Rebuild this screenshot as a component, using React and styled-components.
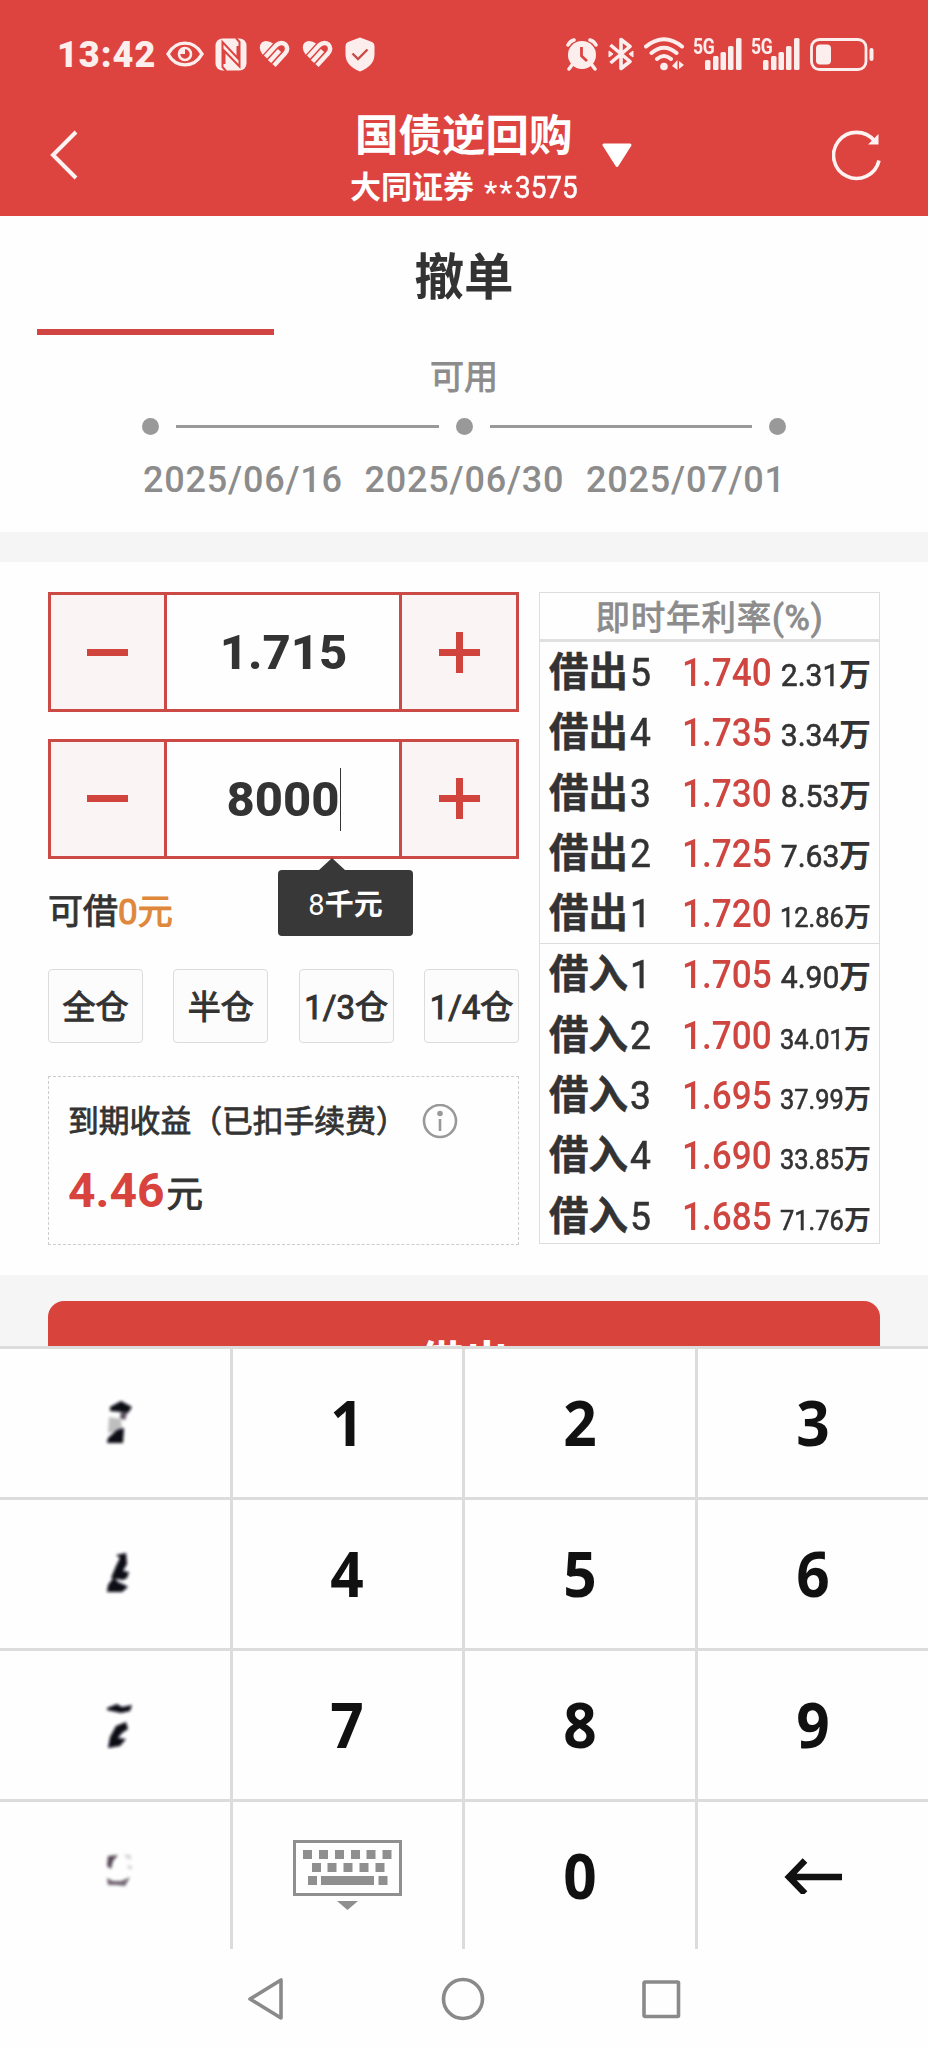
import React, { useState } from "react";
import styled, { createGlobalStyle } from "styled-components";

const asks = [
  { label: "借出", level: 5, rate: "1.740", volume: "2.31" },
  { label: "借出", level: 4, rate: "1.735", volume: "3.34" },
  { label: "借出", level: 3, rate: "1.730", volume: "8.53" },
  { label: "借出", level: 2, rate: "1.725", volume: "7.63" },
  { label: "借出", level: 1, rate: "1.720", volume: "12.86" },
];

const bids = [
  { label: "借入", level: 1, rate: "1.705", volume: "4.90" },
  { label: "借入", level: 2, rate: "1.700", volume: "34.01" },
  { label: "借入", level: 3, rate: "1.695", volume: "37.99" },
  { label: "借入", level: 4, rate: "1.690", volume: "33.85" },
  { label: "借入", level: 5, rate: "1.685", volume: "71.76" },
];

const dates = ["2025/06/16", "2025/06/30", "2025/07/01"];
const positions = ["全仓", "半仓", "1/3仓", "1/4仓"];

const HeartIcon = () => (
  <svg width="31" height="28" viewBox="0 0 31 28" fill="none" stroke="#fdeeee" strokeWidth="4.4">
    <path d="M3.800 14.700C-1 9 0 1.500 7 1Q11 1 14 3.500Z" fill="#fdeeee" stroke="none" />
    <path d="M6.500 17L17 5.500Q22 1 26.500 4.500Q30 9 26 13.500L15 25.500" />
    <path d="M10.500 21.500L20.500 10.500" />
  </svg>
);

const SignalIcon = () => (
  <Signal>
    <span>5G</span>
    <svg width="48" height="34" viewBox="0 0 48 34" fill="#fdeeee">
      <rect x="11" y="23" width="5.5" height="10" rx="1.5" />
      <rect x="19" y="19" width="5.5" height="14" rx="1.5" />
      <rect x="26.500" y="15" width="5.500" height="18" rx="1.5" />
      <rect x="34" y="9" width="5.500" height="24" rx="1.5" />
      <rect x="42" y="1" width="5.500" height="32" rx="1.5" />
    </svg>
  </Signal>
);

const StatusIcons = () => (
  <StatusBar>
    <Clock>13:42</Clock>
    <LeftIcons>
      <svg width="38" height="26" viewBox="0 0 38 26" fill="none" stroke="#fdeeee">
        <path d="M2 13C10 -1.500 28 -1.500 36 13C28 27.500 10 27.500 2 13Z" strokeWidth="3.400" />
        <circle cx="19" cy="13" r="6" strokeWidth="2.6" />
        <path d="M19 13V7.500A5.500 5.500 0 0 0 13.500 13Z" fill="#fdeeee" stroke="none" />
      </svg>
      <svg width="32" height="33" viewBox="0 0 32 33">
        <rect x="0.500" y="0.500" width="31" height="32" rx="7" fill="#fdeeee" />
        <path
          d="M11 33L7.500 29V4L22.500 20V8M9.500 26V13L24.500 28.500V4L21 0"
          stroke="#dd4440"
          strokeWidth="2"
          fill="none"
        />
      </svg>
      <HeartIcon />
      <HeartIcon />
      <svg width="30" height="35" viewBox="0 0 30 35">
        <path d="M15 0.500L27 5Q29.500 6 29.500 9V17Q29.500 29 15 34.500Q0.500 29 0.500 17V9Q0.500 6 3 5Z" fill="#fdeeee" />
        <path d="M7.500 16.500L13 22L22.500 12.500" stroke="#c94b47" strokeWidth="2.4" fill="none" />
      </svg>
    </LeftIcons>
    <RightIcons>
      <svg width="32" height="33" viewBox="0 0 32 33">
        <g stroke="#fdeeee" strokeWidth="3.500" strokeLinecap="round" fill="none">
          <path d="M2 7Q4 3 8 2M24 2Q28 3 30 7M6 27L3 31M26 27L29 31" />
        </g>
        <circle cx="16" cy="17" r="14" fill="#fdeeee" />
        <path d="M15.500 9V18L21 23" stroke="#dd4440" strokeWidth="2.800" fill="none" />
      </svg>
      <svg width="26" height="34" viewBox="0 0 26 34" fill="none" stroke="#fdeeee" strokeWidth="3.600">
        <path d="M2.500 8L22 24.500L13 31.500V2.500L22 9.500L2.500 26" strokeLinejoin="round" />
        <path d="M1 14L5 17L1 20ZM25 14L21 17L25 20Z" fill="#fdeeee" strokeWidth="1" />
      </svg>
      <svg width="41" height="34" viewBox="0 0 41 34" fill="none" stroke="#fdeeee" strokeWidth="4" strokeLinecap="round">
        <path d="M2 9.500Q20 -5 38 9.500M7.500 16Q20 5.500 32.500 16M13 22Q20 16 27 22" />
        <circle cx="20" cy="29.500" r="3.800" fill="#fdeeee" stroke="none" />
        <path d="M28 29L33.500 23V33Z M35 24L40 28L35 32Z" fill="#fdeeee" stroke="none" />
      </svg>
      <SignalIcon />
      <SignalIcon />
      <svg width="64" height="33" viewBox="0 0 64 33">
        <rect x="1.500" y="1.500" width="54.500" height="30" rx="8" fill="none" stroke="#fdeeee" strokeWidth="2.800" />
        <rect x="6" y="6.500" width="15" height="20" rx="4" fill="#fdeeee" />
        <rect x="59.500" y="10" width="4" height="13" rx="2" fill="#fdeeee" />
      </svg>
    </RightIcons>
  </StatusBar>
);

const KeyboardIcon = () => (
  <svg width="110" height="70" viewBox="0 0 110 70" fill="#8f8f8f">
    <rect x="1.500" y="1.500" width="106" height="53" fill="none" stroke="#8f8f8f" strokeWidth="3" />
    {[10, 26, 42, 58, 73.500, 89.500].map((x) => (
      <rect key={x} x={x} y="10" width="9" height="9" />
    ))}
    {[19, 34.500, 50.500, 66.500, 82.500].map((x) => (
      <rect key={x} x={x} y="23" width="9" height="9" />
    ))}
    <rect x="15" y="36" width="9" height="9" />
    <rect x="28" y="36" width="53" height="9" />
    <rect x="85.500" y="36" width="9" height="9" />
    <path d="M44 61H65L54.500 70Z" />
  </svg>
);

const marks = [
  <>
    <path d="M4 8L15 2L26 8L22 14L16 13L4 12Z" />
    <path d="M15 13L21 14L19 21L14 19Z" opacity="0.7" />
    <path d="M3 18L15 20L16 30L9 33L2 34Z" opacity="0.25" />
    <path d="M11 31L18 29L17 44L1 44L2 39Z" />
  </>,
  <>
    <path d="M10 5L20 3L21 14L17 21L23 22L21 28L17 30L5 28L10 16L14 8Z" />
    <path d="M8 27L12 32L19 35L22 37L16 42H1L2 35Z" />
  </>,
  <>
    <path d="M1 7L11 3L16 6L26 4L24 10L15 12L1 9Z" />
    <path d="M10 25L20 21L22 28L16 32L12 37L20 38L14 45L2 47L4 36Z" />
  </>,
  <>
    <path d="M2 4L12 3L7 9L5 17L1 14Z" opacity="0.7" />
    <path d="M1 26L7 29L15 29L20 27L24 25L19 34L10 33L2 33Z" opacity="0.6" />
    <path d="M18 2L25 3V8L20 6ZM22 13L26 14V18L21 16Z" opacity="0.15" />
  </>,
];

const Smudge = ({ index }) => (
  <svg width="30" height="50" viewBox="-2 -1 30 50" fill="#0b0814">
    <filter id={`soft${index}`} x="-30%" y="-30%" width="160%" height="160%">
      <feGaussianBlur stdDeviation="1.8" />
    </filter>
    <g filter={`url(#soft${index})`}>{marks[index]}</g>
  </svg>
);

const Stepper = ({ children }) => (
  <StepperBox>
    <StepButton>
      <svg width="41" height="41" fill="#d1443e">
        <rect y="17" width="41" height="7" />
      </svg>
    </StepButton>
    <StepValue>{children}</StepValue>
    <StepButton>
      <svg width="41" height="41" fill="#d1443e">
        <rect y="17" width="41" height="7" />
        <rect x="17" width="7" height="41" />
      </svg>
    </StepButton>
  </StepperBox>
);

const Quotes = ({ rows }) => (
  <QuoteGroup>
    {rows.map((row) => (
      <QuoteRow key={row.label + row.level}>
        <Level>
          <b>{row.label}</b>
          <span>{row.level}</span>
        </Level>
        <Rate>{row.rate}</Rate>
        <Volume $small={row.volume.length > 4}>
          <span>{row.volume}</span>
          <b>万</b>
        </Volume>
      </QuoteRow>
    ))}
  </QuoteGroup>
);

const App = () => {
  const [amount] = useState("8000");

  return (
    <>
      <GlobalStyle />
      <Phone>
        <Header>
          <StatusIcons />
          <TitleBar>
            <svg width="28" height="50" viewBox="0 0 28 50" fill="none" stroke="#fff2f2" strokeWidth="4">
              <path d="M26 2L3 25L26 48" />
            </svg>
            <Titles>
              <h1>国债逆回购</h1>
              <Account>
                <b>大同证券</b>
                <i>**</i>
                <span>3575</span>
              </Account>
            </Titles>
            <DropArrow width="30" height="25" viewBox="0 0 30 25">
              <path d="M2 2H28L15 22.500Z" fill="#fff" stroke="#fff" strokeWidth="3" strokeLinejoin="round" />
            </DropArrow>
            <svg width="50" height="52" viewBox="0 0 50 52" fill="none" stroke="#fff2f2" strokeWidth="3.600">
              <path d="M47 31.500A23 23 0 1 1 42.500 12" />
              <path d="M46.500 5V15.500H36Z" fill="#fff2f2" stroke="none" />
            </svg>
          </TitleBar>
        </Header>

        <Tab>撤单</Tab>
        <TabLine />
        <Timeline>
          <p>可用</p>
          <Track>
            <Dot />
            <Line />
            <Dot />
            <Line />
            <Dot />
          </Track>
          <Dates>
            {dates.map((date) => (
              <span key={date}>{date}</span>
            ))}
          </Dates>
        </Timeline>
        <Band />

        <Trade>
          <Form>
            <Stepper>1.715</Stepper>
            <Stepper>
              {amount}
              <Caret />
            </Stepper>
            <Available>
              可借<em>0元</em>
              <Tip>
                8<b>千元</b>
              </Tip>
            </Available>
            <Positions>
              {positions.map((name) => (
                <Position key={name}>{name}</Position>
              ))}
            </Positions>
            <Income>
              <IncomeTitle>
                到期收益（已扣手续费）
                <svg width="36" height="36" viewBox="0 0 36 36" fill="none" stroke="#999" strokeWidth="2.600">
                  <circle cx="18" cy="17" r="16" />
                  <circle cx="18" cy="9.500" r="2.800" fill="#999" stroke="none" />
                  <path d="M18 15V27" />
                </svg>
              </IncomeTitle>
              <IncomeValue>
                <b>4.46</b>元
              </IncomeValue>
            </Income>
          </Form>
          <Book>
            <BookTitle>即时年利率(%)</BookTitle>
            <Quotes rows={asks} />
            <Quotes rows={bids} />
          </Book>
        </Trade>

        <SubmitArea>
          <Submit>借出</Submit>
        </SubmitArea>

        <Keypad>
          {[0, 1, 2].map((row) => (
            <React.Fragment key={row}>
              <Key $side>
                <Smudge index={row} />
              </Key>
              {[1, 2, 3].map((n) => (
                <Key key={n}>
                  <Digit>{row * 3 + n}</Digit>
                </Key>
              ))}
            </React.Fragment>
          ))}
          <Key $side>
            <Smudge index={3} />
          </Key>
          <Key>
            <KeyboardIcon />
          </Key>
          <Key>
            <Digit>0</Digit>
          </Key>
          <Key>
            <svg width="58" height="38" viewBox="0 0 58 38" fill="none" stroke="#111" strokeWidth="6.500">
              <path d="M58 21H5M21 4.500L5 21L21 37.500" />
            </svg>
          </Key>
        </Keypad>

        <NavBar>
          <svg width="38" height="44" viewBox="0 0 38 44">
            <path d="M34 3V41L3 22Z" />
          </svg>
          <svg width="44" height="44" viewBox="0 0 44 44">
            <circle cx="22" cy="22" r="19.500" />
          </svg>
          <svg width="40" height="44" viewBox="0 0 40 44">
            <rect x="3" y="5" width="34.500" height="34.500" rx="1" />
          </svg>
        </NavBar>
      </Phone>
    </>
  );
};

const GlobalStyle = createGlobalStyle`
  * {
    box-sizing: border-box;
  }
  body {
    margin: 0;
    background: #fefefe;
    color: #333;
    font-family: Roboto, "Noto Sans CJK SC", sans-serif;
  }
  svg {
    display: block;
    flex: none;
  }
`;

const Phone = styled.div`
  width: 928px;
  height: 2048px;
  overflow: hidden;
  display: flex;
  flex-direction: column;
`;

const Header = styled.header`
  height: 216px;
  flex: none;
  background: #dd4440;
  color: #fff;
`;

const StatusBar = styled.div`
  height: 108px;
  padding: 0 54px 0 57px;
  display: flex;
  align-items: center;
`;

const Clock = styled.span`
  width: 109px;
  padding-top: 1px;
  font-size: 36px;
  font-weight: 900;
  letter-spacing: 1px;
  color: #fdeeee;
`;

const LeftIcons = styled.div`
  display: flex;
  align-items: center;
  gap: 12px;
  svg:nth-child(2) {
    margin-left: -1px;
  }
`;

const RightIcons = styled.div`
  margin-left: auto;
  display: flex;
  align-items: center;
  gap: 9.800px;
`;

const Signal = styled.div`
  position: relative;
  span {
    position: absolute;
    left: -1px;
    top: 0;
    font-size: 22px;
    line-height: 19px;
    font-weight: 700;
    letter-spacing: -0.500px;
    transform: scaleX(0.8);
    transform-origin: left;
    color: #fdeeee;
  }
`;

const TitleBar = styled.div`
  height: 94px;
  padding: 0 46px 0 50px;
  display: flex;
  align-items: center;
`;

const Titles = styled.div`
  width: 232px;
  margin-left: 272px;
  padding-top: 14px;
  h1 {
    margin: 0 0 0 5px;
    font-size: 43.500px;
    line-height: 54px;
    font-weight: 700;
    white-space: nowrap;
  }
`;

const Account = styled.div`
  display: flex;
  align-items: center;
  margin-top: -3px;
  font-size: 31px;
  line-height: 43px;
  i {
    font-style: normal;
    margin: 10px 0 0 10px;
    letter-spacing: 2px;
  }
  span {
    width: 63px;
    transform: scaleX(0.9);
    transform-origin: left;
    -webkit-text-stroke: 0.500px;
  }
`;

const DropArrow = styled.svg`
  margin: 0 auto 0 20px;
`;

const Tab = styled.div`
  height: 113px;
  flex: none;
  font-size: 49.500px;
  line-height: 125px;
  font-weight: 600;
  text-align: center;
`;

const TabLine = styled.div`
  width: 237px;
  height: 6px;
  flex: none;
  margin-left: 36.500px;
  background: #d14542;
`;

const Timeline = styled.div`
  height: 197px;
  flex: none;
  padding-top: 22px;
  color: #8c8c8c;
  p {
    margin: 0;
    font-size: 34px;
    line-height: 40px;
    text-align: center;
    -webkit-text-stroke: 0.900px;
  }
`;

const Track = styled.div`
  margin: 21px 142px 0 142px;
  display: flex;
  align-items: center;
`;

const Dot = styled.i`
  width: 17px;
  height: 17px;
  border-radius: 50%;
  background: #999;
`;

const Line = styled.i`
  flex: 1;
  height: 3px;
  margin: 0 17px;
  background: #999;
`;

const Dates = styled.div`
  margin: 23px 0 0 143px;
  display: flex;
  font-size: 36px;
  line-height: 44px;
  font-weight: 500;
  letter-spacing: 0.800px;
  span {
    width: 221.500px;
  }
`;

const Band = styled.div`
  height: 30px;
  flex: none;
  background: #f5f5f5;
`;

const Trade = styled.div`
  height: 713px;
  flex: none;
  padding: 30px 48px 0;
  display: flex;
  justify-content: space-between;
`;

const Form = styled.div`
  width: 471px;
`;

const StepperBox = styled.div`
  height: 120px;
  margin-bottom: 26.500px;
  display: grid;
  grid-template-columns: 113px 1fr 114px;
  border: 3px solid #cb4a46;
`;

const StepButton = styled.div`
  display: flex;
  align-items: center;
  justify-content: center;
  background: #faf4f4;
`;

const StepValue = styled.div`
  display: flex;
  align-items: center;
  justify-content: center;
  padding: 1px 0 0 1px;
  border: solid #cb4a46;
  border-width: 0 3px;
  font-size: 49px;
  font-weight: 800;
`;

const Caret = styled.i`
  width: 1px;
  height: 63px;
  background: #333;
`;

const Available = styled.div`
  position: relative;
  height: 57px;
  margin-top: 1px;
  font-size: 35px;
  line-height: 56px;
  -webkit-text-stroke: 0.900px;
  em {
    font-style: normal;
    -webkit-text-stroke: 1.100px;
    color: #df883c;
  }
`;

const Tip = styled.div`
  position: absolute;
  left: 230px;
  top: -15px;
  width: 135px;
  height: 66px;
  padding-top: 2px;
  border-radius: 4px;
  background: #383838;
  color: #fff;
  font-size: 29px;
  line-height: 66px;
  text-align: center;
  -webkit-text-stroke: 0;
  &::before {
    content: "";
    position: absolute;
    left: 41px;
    top: -12px;
    border: solid transparent;
    border-width: 0 13px 12px;
    border-bottom-color: #383838;
  }
`;

const Positions = styled.div`
  margin-top: 27px;
  display: flex;
  justify-content: space-between;
`;

const Position = styled.div`
  width: 95px;
  height: 74px;
  padding-top: 2px;
  display: flex;
  justify-content: center;
  border: 1.500px solid #dcdcdc;
  border-radius: 4px;
  background: #fcfcfc;
  font-size: 33px;
  line-height: 72px;
  white-space: nowrap;
  -webkit-text-stroke: 1px;
`;

const Income = styled.div`
  height: 169px;
  margin-top: 33px;
  padding: 25px 0 0 19px;
  border: 1.500px dashed #ccc;
`;

const IncomeTitle = styled.div`
  display: flex;
  align-items: center;
  gap: 15px;
  font-size: 30.800px;
  line-height: 38px;
  padding-top: 1px;
  white-space: nowrap;
  -webkit-text-stroke: 0.800px;
`;

const IncomeValue = styled.div`
  margin-top: 18px;
  font-size: 36.500px;
  line-height: 64px;
  -webkit-text-stroke: 1px;
  b {
    margin-right: 2px;
    font-size: 48px;
    color: #d8433e;
    -webkit-text-stroke: 0;
  }
`;

const Book = styled.div`
  width: 341px;
  height: 652px;
  border: 1.500px solid #ddd;
`;

const BookTitle = styled.div`
  height: 49px;
  border-bottom: 3px solid #e0e0e0;
  font-size: 34.500px;
  line-height: 50px;
  letter-spacing: 0.800px;
  color: #8c8c8c;
  text-align: center;
  -webkit-text-stroke: 0.900px;
`;

const QuoteGroup = styled.div`
  & + & {
    border-top: 1.500px solid #ddd;
  }
`;

const QuoteRow = styled.div`
  height: 60.300px;
  padding: 1px 8px 0 9px;
  display: grid;
  grid-template-columns: 133px 88px 1fr;
  align-items: baseline;
  line-height: 60px;
  white-space: nowrap;
`;

const Level = styled.span`
  font-size: 39.500px;
  b {
    margin-right: 2px;
    -webkit-text-stroke: 0.500px;
  }
  span {
    display: inline-block;
    transform: scaleX(0.94);
    transform-origin: left;
    -webkit-text-stroke: 0.600px;
  }
`;

const Rate = styled.span`
  width: 98px;
  font-size: 39.500px;
  font-weight: 500;
  transform: scaleX(0.89);
  transform-origin: left;
  color: #cf4641;
`;

const Volume = styled.span`
  text-align: right;
  font-size: ${(props) => (props.$small ? "27px" : "32px")};
  span {
    display: inline-block;
    margin-left: -20px;
    transform: scaleX(0.94);
    transform-origin: right;
    -webkit-text-stroke: 0.600px;
  }
`;

const SubmitArea = styled.div`
  height: 71px;
  flex: none;
  padding: 26px 48px 0;
  overflow: hidden;
  background: #f5f5f5;
`;

const Submit = styled.div`
  height: 120px;
  border-radius: 16px;
  background: #d8433c;
  color: #fff;
  font-size: 46px;
  line-height: 124px;
  font-weight: 700;
  text-align: center;
`;

const Keypad = styled.div`
  height: 603px;
  flex: none;
  padding-top: 3px;
  display: grid;
  grid-template-columns: 230px 229px 230px 230px;
  grid-template-rows: repeat(4, 148px);
  gap: 3px;
  background: #dcdcdc;
`;

const Key = styled.div`
  display: flex;
  align-items: center;
  justify-content: center;
  padding: ${(props) => (props.$side ? "0 0 0 8px" : "0 0 3px")};
  background: #fefefe;
`;

const Digit = styled.span`
  color: #111;
  font-family: "Noto Sans", sans-serif;
  font-size: 63px;
  font-weight: 700;
  line-height: 1;
  transform: scaleX(0.93);
`;

const NavBar = styled.div`
  flex: 1;
  padding: 0 247px 0 247px;
  display: flex;
  align-items: center;
  justify-content: space-between;
  background: #fefefe;
  svg {
    fill: none;
    stroke: #8a8a8a;
    stroke-width: 3.600;
    stroke-linejoin: round;
  }
`;

export default App;
